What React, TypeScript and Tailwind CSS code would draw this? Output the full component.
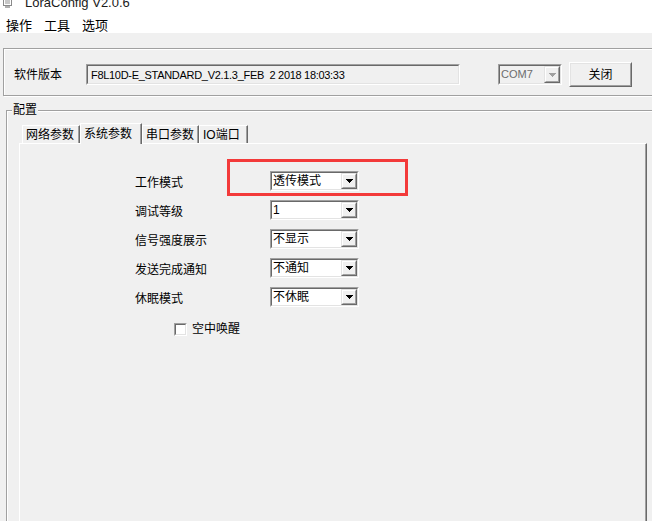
import React from "react";

const rows = [
  { label: "工作模式", value: "透传模式" },
  { label: "调试等级", value: "1" },
  { label: "信号强度展示", value: "不显示" },
  { label: "发送完成通知", value: "不通知" },
  { label: "休眠模式", value: "不休眠" },
];

const tabs = [
  { name: "网络参数", w: "w-[58px]", active: false },
  { name: "系统参数", w: "w-[62px]", active: true },
  { name: "串口参数", w: "w-[57px]", active: false },
  { name: "IO端口", w: "w-[49px]", active: false },
];

function Sunken({ className = "", inner = "", children }: any) {
  return (
    <div
      className={
        "border border-t-[#a0a0a0] border-l-[#a0a0a0] border-r-white border-b-white " +
        className
      }
    >
      <div
        className={
          "h-full border border-t-[#696969] border-l-[#696969] border-r-[#e3e3e3] border-b-[#e3e3e3] " +
          inner
        }
      >
        {children}
      </div>
    </div>
  );
}

function Arrow({ color }: { color: string }) {
  return (
    <svg width="7" height="4" viewBox="0 0 7 4" shapeRendering="crispEdges">
      <path d="M0 0h7v1h-1v1h-1v1h-1v1h-1v-1h-1v-1h-1v-1h-1z" fill={color} />
    </svg>
  );
}

function DropButton({ disabled }: { disabled?: boolean }) {
  return (
    <div className="w-[16px] h-full border border-t-[#e3e3e3] border-l-[#e3e3e3] border-r-[#696969] border-b-[#696969]">
      <div className="h-full flex items-center justify-center bg-[#f0f0f0] border border-t-white border-l-white border-r-[#a0a0a0] border-b-[#a0a0a0]">
        <Arrow color={disabled ? "#a0a0a0" : "#000"} />
      </div>
    </div>
  );
}

function Combo({ value }: { value: string }) {
  return (
    <Sunken className="w-[89px] h-[20px]" inner="flex bg-white">
      <span className="flex-1 pl-[1px] text-[12px] leading-[16px]">{value}</span>
      <DropButton />
    </Sunken>
  );
}

export default function App() {
  return (
    <div className="relative w-[652px] h-[521px] overflow-hidden bg-[#f0f0f0] text-black font-['Liberation_Sans','Noto_Sans_CJK_SC',sans-serif]">
      {/* title bar, cut off at the top */}
      <div className="h-[10px] bg-white overflow-hidden flex items-start">
        <svg className="ml-[2px] -mt-[3px]" width="11" height="12" viewBox="0 0 11 12">
          <rect x="1.5" y="1.5" width="8" height="7" fill="#fff" stroke="#8a8a8a" />
          <rect x="3" y="9" width="5" height="2" fill="#b0b0b0" />
          <rect x="3" y="3" width="5" height="4" fill="#c8c8c8" />
        </svg>
        <span className="ml-[12px] -mt-[4px] text-[13px] leading-[13px] text-[#1a1a1a]">
          LoraConfig V2.0.6
        </span>
      </div>

      {/* menu */}
      <div className="h-[23px] bg-white flex gap-[12px] pl-[6px] pt-[9px] text-[13px] leading-[14px]">
        <span>操作</span>
        <span>工具</span>
        <span>选项</span>
      </div>

      {/* version group */}
      <div className="mt-[15px] ml-[3px] w-[660px] h-[48px] border border-[#a0a0a0] shadow-[inset_1px_1px_0_#fff,1px_1px_0_#fff] flex items-center pt-[5px] pl-[10px]">
        <span className="w-[72px] text-[12px] leading-[14px]">软件版本</span>
        <Sunken className="w-[374px] h-[21px]" inner="flex items-center pl-[3px]">
          <span className="text-[11px] tracking-[-0.3px] whitespace-pre leading-[14px]">
            F8L10D-E_STANDARD_V2.1.3_FEB  2 2018 18:03:33
          </span>
        </Sunken>
        <Sunken className="ml-[38px] w-[64px] h-[21px]" inner="flex bg-[#f0f0f0]">
          <span className="flex-1 pl-[1px] text-[11px] leading-[17px] text-[#6d6d6d]">COM7</span>
          <DropButton disabled />
        </Sunken>
        <div className="ml-[7px] w-[63px] h-[25px] border border-t-white border-l-white border-r-[#696969] border-b-[#696969]">
          <div className="h-full flex items-center justify-center bg-[#f0f0f0] border border-t-[#e3e3e3] border-l-[#e3e3e3] border-r-[#a0a0a0] border-b-[#a0a0a0] text-[12px] leading-[14px]">
            关闭
          </div>
        </div>
      </div>

      {/* config group */}
      <fieldset className="mt-[7px] ml-[6px] w-[660px] h-[480px] border border-[#a0a0a0] shadow-[inset_1px_1px_0_#fff]">
        <legend className="ml-[5px] px-[1px] bg-[#f0f0f0] text-[12px] leading-[14px]">配置</legend>
        <div className="pl-[12px] pt-[6px]">
          <div className="flex items-end h-[20px] pl-[3px]">
            {tabs.map((t) =>
              t.active ? (
                <div
                  key={t.name}
                  className={
                    t.w +
                    " relative z-10 -mb-px h-[21px] pl-[3px] pt-[2px] bg-[#f0f0f0] border-l border-t border-r border-l-white border-t-white border-r-[#696969] shadow-[inset_-1px_0_0_#a0a0a0] text-[12px] leading-[16px]"
                  }
                >
                  {t.name}
                </div>
              ) : (
                <div
                  key={t.name}
                  className={
                    t.w +
                    " h-[18px] pl-[3px] pt-[1px] border-l border-t border-r border-l-white border-t-white border-r-[#696969] shadow-[inset_-1px_0_0_#a0a0a0] text-[12px] leading-[16px]"
                  }
                >
                  {t.name}
                </div>
              )
            )}
          </div>

          <div className="w-[628px] h-[400px] border-t border-l border-r border-t-white border-l-white border-r-[#696969] shadow-[inset_-1px_0_0_#a0a0a0] pt-[27px] flex flex-col gap-[9px]">
            {rows.map((r) => (
              <div key={r.label} className="flex items-center h-[20px] pl-[115px]">
                <span className="w-[135px] pt-[3px] text-[12px] leading-[14px]">{r.label}</span>
                <Combo value={r.value} />
              </div>
            ))}
            <div className="mt-[6px] flex items-center pl-[154px]">
              <Sunken className="w-[13px] h-[13px]" inner="bg-white" />
              <span className="ml-[5px] text-[12px] leading-[14px]">空中唤醒</span>
            </div>
          </div>
        </div>
      </fieldset>

      {/* red annotation box */}
      <div className="absolute left-[227px] top-[159px] w-[181px] h-[37px] border-[3px] border-[#f33a3a]" />
    </div>
  );
}
